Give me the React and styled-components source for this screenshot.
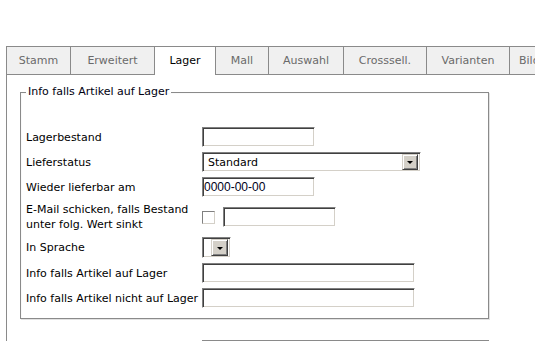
import React from "react";
import styled, { createGlobalStyle } from "styled-components";

const Global = createGlobalStyle`
  html, body { margin: 0; padding: 0; background: #fff; overflow: hidden; }
  body { font-family: "DejaVu Sans", Verdana, sans-serif; font-size: 11px; color: #000; }
`;

const Page = styled.div`
  padding: 46px 0 0 6px;
  width: 700px;
`;

const TabBar = styled.div`
  display: flex;
  border-bottom: 1px solid #8a8a8a;
  height: 29px;
  box-sizing: border-box;
`;

const Tab = styled.div`
  flex-shrink: 0;
  box-sizing: border-box;
  height: ${(p) => (p.$active ? "29px" : "28px")};
  padding: 0 ${(p) => p.$pad}px;
  display: flex;
  align-items: center;
  justify-content: ${(p) => (p.$w ? "center" : "flex-start")};
  width: ${(p) => (p.$w ? `${p.$w}px` : "auto")};
  border-top: 1px solid #8a8a8a;
  border-right: 1px solid #8a8a8a;
  border-left: ${(p) => (p.$first ? "1px solid #8a8a8a" : "none")};
  background: ${(p) => (p.$active ? "#fff" : "#f0f0f0")};
  color: ${(p) => (p.$active ? "#000" : "#6a6a6a")};
  font-size: 11px;
  line-height: 14px;
  white-space: nowrap;
  overflow: hidden;
`;

const Panel = styled.div`
  border-left: 1px solid #8a8a8a;
  padding: 10px 0 0 13px;
  height: 300px;
`;

const Fieldset = styled.fieldset`
  margin: 0;
  width: 469px;
  box-sizing: border-box;
  border: 1px solid #8a8a8a;
  box-shadow: 1px 1px 0 #e2e2e2, inset 1px 1px 0 #fafafa;
  padding: 28px 0 10px 5px;
`;

const Legend = styled.legend`
  padding: 0 2px;
  margin-left: 0;
  font-size: 11px;
  line-height: 14px;
  color: #000010;
`;

const Form = styled.div`
  display: grid;
  grid-template-columns: 176px 1fr;
  row-gap: 5px;
  align-items: center;
`;

const Label = styled.div`
  font-size: 11px;
  line-height: 15px;
  white-space: nowrap;
`;

const Cell = styled.div`
  display: flex;
  align-items: center;
  gap: 8px;
`;

const Input = styled.div`
  box-sizing: border-box;
  width: ${(p) => p.$w}px;
  height: 20px;
  border: 1px solid;
  border-color: #808080 #fff #fff #808080;
  box-shadow: inset 1px 1px 0 #404040, inset -1px -1px 0 #d4d0c8;
  background: #fff;
  font-family: "Liberation Sans", Arial, sans-serif;
  font-size: 12px;
  line-height: 18px;
  padding-left: 1px;
  color: #000020;
`;

const Select = styled.div`
  box-sizing: border-box;
  width: ${(p) => p.$w}px;
  height: ${(p) => p.$h}px;
  border: 1px solid;
  border-color: #808080 #fff #fff #808080;
  box-shadow: inset 1px 1px 0 #404040, inset -1px -1px 0 #d4d0c8;
  background: #fff;
  display: flex;
  align-items: center;
  justify-content: space-between;
  padding: 2px 2px 2px 5px;
  font-size: 11px;
`;

const DropButton = styled.div`
  box-sizing: border-box;
  width: ${(p) => p.$s}px;
  height: ${(p) => p.$s}px;
  background: #d4d0c8;
  border: 1px solid;
  border-color: #d4d0c8 #404040 #404040 #d4d0c8;
  box-shadow: inset 1px 1px 0 #fff, inset -1px -1px 0 #808080;
  display: flex;
  align-items: center;
  justify-content: center;
  &::after {
    content: "";
    border-left: 3px solid transparent;
    border-right: 3px solid transparent;
    border-top: 3px solid #000;
    margin-top: 1px;
  }
`;

const Checkbox = styled.div`
  box-sizing: border-box;
  width: 13px;
  height: 13px;
  border: 1px solid;
  border-color: #808080 #d4d0c8 #d4d0c8 #808080;
  background: #fff;
`;

const Trailer = styled.div`
  margin: 21px 0 0 182px;
  width: 287px;
  border-top: 1px solid #8a8a8a;
`;

const tabs = [
  ["Stamm", 65],
  ["Erweitert", 84],
  ["Lager", 61],
  ["Mall", 53],
  ["Auswahl", 75],
  ["Crosssell.", 83],
  ["Varianten", 83],
  ["Bilder", 0],
];

export default function App() {
  return (
    <>
      <Global />
      <Page>
        <TabBar>
          {tabs.map(([t, w], i) => (
            <Tab key={t} $w={w} $pad={w ? 0 : 9} $first={i === 0} $active={t === "Lager"}>
              {t}
            </Tab>
          ))}
        </TabBar>
        <Panel>
          <Fieldset>
            <Legend>Info falls Artikel auf Lager</Legend>
            <Form>
              <Label>Lagerbestand</Label>
              <Cell>
                <Input $w={113} />
              </Cell>
              <Label>Lieferstatus</Label>
              <Cell>
                <Select $w={219} $h={20}>
                  <span>Standard</span>
                  <DropButton $s={16} />
                </Select>
              </Cell>
              <Label>Wieder lieferbar am</Label>
              <Cell>
                <Input $w={113}>0000-00-00</Input>
              </Cell>
              <Label>
                E-Mail schicken, falls Bestand
                <br />
                unter folg. Wert sinkt
              </Label>
              <Cell>
                <Checkbox />
                <Input $w={113} />
              </Cell>
              <Label>In Sprache</Label>
              <Cell>
                <Select $w={29} $h={21}>
                  <span />
                  <DropButton $s={17} />
                </Select>
              </Cell>
              <Label>Info falls Artikel auf Lager</Label>
              <Cell>
                <Input $w={213} />
              </Cell>
              <Label>Info falls Artikel nicht auf Lager</Label>
              <Cell>
                <Input $w={213} />
              </Cell>
            </Form>
          </Fieldset>
          <Trailer />
        </Panel>
      </Page>
    </>
  );
}
